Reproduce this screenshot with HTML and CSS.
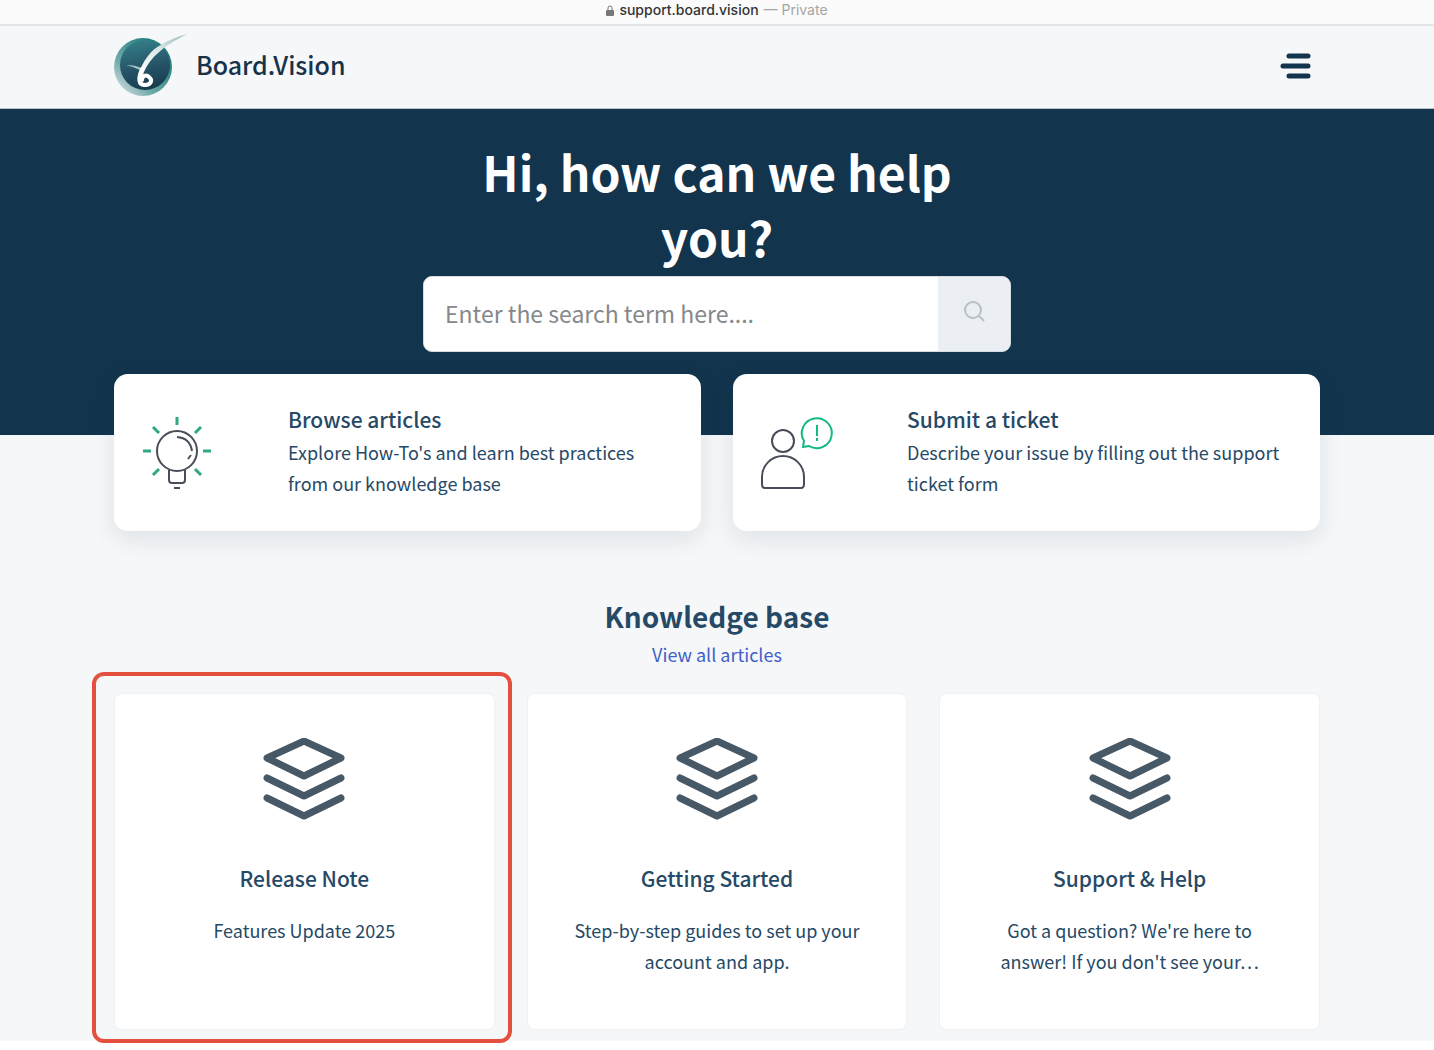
FILE: index.html
```html
<!DOCTYPE html>
<html lang="en">
<head>
<meta charset="utf-8">
<meta name="viewport" content="width=device-width, initial-scale=1">
<title>Board.Vision Support</title>
<link rel="stylesheet" href="styles.css">
</head>
<body>
<svg width="0" height="0" class="sprite" aria-hidden="true">
  <symbol id="layers" viewBox="0 0 82 82">
    <path d="M41 3 78 20 41 38 4 20ZM4 40 41 58 78 40M4 60 41 78 78 60" fill="none" stroke="currentColor" stroke-width="7" stroke-linecap="round" stroke-linejoin="round"/>
  </symbol>
</svg>
<div class="address-bar">
  <svg class="lock" viewBox="0 0 8 11" aria-hidden="true"><path d="M2 5V3a2 2 0 0 1 4 0v2" fill="none" stroke="#777" stroke-width="1"/><rect y="5" width="8" height="6" rx="1" fill="#777"/></svg>
  <span class="address">support.board.vision</span>
  <span class="mode">— Private</span>
</div>
<div class="page">
  <header class="header">
    <div class="container header-row">
      <a class="brand" href="#">
        <svg class="logo" viewBox="0 0 74 64" aria-hidden="true">
          <defs>
            <linearGradient id="ring" x1="0.1" y1="0.9" x2="0.8" y2="0.2"><stop offset="0" stop-color="#c9d9dc"/><stop offset="0.35" stop-color="#6fa9aa"/><stop offset="1" stop-color="#1f7f7c"/></linearGradient>
            <linearGradient id="disc" x1="0.3" y1="0" x2="0.5" y2="1"><stop offset="0" stop-color="#34808a"/><stop offset="0.55" stop-color="#275467"/><stop offset="1" stop-color="#183b4d"/></linearGradient>
            <linearGradient id="tail" x1="0" y1="1" x2="1" y2="0"><stop offset="0" stop-color="#fff"/><stop offset="0.55" stop-color="#d5e6e5"/><stop offset="1" stop-color="#8fb5b4"/></linearGradient>
          </defs>
          <circle cx="29" cy="33" r="29" fill="url(#ring)"/>
          <circle cx="31" cy="31" r="25" fill="url(#disc)"/>
          <path d="M12 31Q22 31 27 34L26 36Q20 33 12 31Z" fill="#9fc0c5"/>
          <path d="M73 0C53 6 40 13 34 22C29 28 26 35 25 41L29 41C31 34 37 25 43 20C51 12 60 7 73 0Z" fill="url(#tail)"/>
          <path d="M28 35C24 44 24 51 31 51C37 51 39 46 35 43C32 40 28 42 28 46" fill="none" stroke="#fff" stroke-width="4" stroke-linecap="round"/>
        </svg>
        <span>Board.Vision</span>
      </a>
      <button class="menu" type="button" aria-label="Menu">
        <svg viewBox="0 0 32 28" aria-hidden="true"><path d="M9 4H28M3 14H28M9 24H28" stroke="#12344d" stroke-width="5" stroke-linecap="round"/></svg>
      </button>
    </div>
  </header>
  <section class="hero">
    <h1>Hi, how can we help you?</h1>
    <form class="search">
      <input type="search" placeholder="Enter the search term here...." aria-label="Search">
      <button type="button" aria-label="Search">
        <svg viewBox="0 0 22 22" aria-hidden="true"><circle cx="10" cy="10" r="8" fill="none" stroke="#b9bec4" stroke-width="2"/><path d="m16 16 5 5" stroke="#b9bec4" stroke-width="2"/></svg>
      </button>
    </form>
  </section>
  <main class="container">
    <div class="actions">
      <a class="action" href="#">
        <svg viewBox="0 0 74 74" aria-hidden="true" fill="none" stroke-width="2">
          <path d="M35 2v8M11 12l6 6M59 12l-6 6M1 36h8M61 36h8M11 60l6-6M59 60l-6-6" stroke="#2fa884" stroke-width="3"/>
          <circle cx="35" cy="36" r="20" stroke="#474e59"/>
          <path d="M35 22q13 1 15 14M49 40l-3 4" stroke="#474e59"/>
          <path d="M27 55v10q0 3 3 3h10q3 0 3-3V55M32 73h6" stroke="#474e59"/>
        </svg>
        <div><h2>Browse articles</h2><p>Explore How-To's and learn best practices from our knowledge base</p></div>
      </a>
      <a class="action" href="#">
        <svg viewBox="0 0 74 74" aria-hidden="true" fill="none" stroke-width="2">
          <circle cx="22" cy="26" r="11" stroke="#474e59"/>
          <path d="M4 73H40Q43 73 43 69V62A21 21 0 0 0 1 62V69Q1 73 4 73Z" stroke="#474e59"/>
          <path d="M43 26A15 15 0 1 1 48 31L42 32Z" stroke="#12b886" stroke-linejoin="round"/>
          <path d="M56 10v11M56 23v3" stroke="#12b886"/>
        </svg>
        <div><h2>Submit a ticket</h2><p>Describe your issue by filling out the support ticket form</p></div>
      </a>
    </div>
    <section class="knowledge">
      <h2>Knowledge base</h2>
      <a class="view-all" href="#">View all articles</a>
      <div class="cards">
        <a class="card card-marked" href="#"><svg aria-hidden="true"><use href="#layers"/></svg><h3>Release Note</h3><p>Features Update 2025</p></a>
        <a class="card" href="#"><svg aria-hidden="true"><use href="#layers"/></svg><h3>Getting Started</h3><p>Step-by-step guides to set up your account and app.</p></a>
        <a class="card" href="#"><svg aria-hidden="true"><use href="#layers"/></svg><h3>Support &amp; Help</h3><p>Got a question? We're here to answer! If you don't see your…</p></a>
      </div>
    </section>
  </main>
</div>
</body>
</html>
```
FILE: styles.css
```css
* { box-sizing: border-box; }
body {
  margin: 0;
  min-height: 100vh;
  background: #fff;
  color: #264966;
  font-family: "Noto Sans CJK SC", "Noto Sans", sans-serif;
  font-size: 18px;
  line-height: 31px;
}
h1, h2, h3, p { margin: 0; }
a { color: inherit; text-decoration: none; }
button { border: 0; padding: 0; cursor: pointer; }
.sprite { position: absolute; }
.address-bar {
  display: flex;
  align-items: center;
  justify-content: center;
  gap: 5px;
  height: 26px;
  padding-bottom: 4px;
  background: #fbfbfb;
  border-bottom: 2px solid #e4e5e6;
  font-family: Inter, "Liberation Sans", sans-serif;
  font-size: 14px;
  line-height: 20px;
}
.lock { width: 8px; height: 11px; }
.address { color: #333; font-weight: 500; }
.mode { color: #a5a5a5; }
.page { background: #f5f7f9; padding-bottom: 12px; }
.container { width: 85%; max-width: 1206px; margin: 0 auto; }
.header { border-bottom: 1px solid #b9c5ce; }
.header-row { display: flex; align-items: center; justify-content: space-between; height: 82px; padding-bottom: 2px; }
.brand { display: flex; align-items: center; gap: 8px; color: #183247; font-size: 25px; font-weight: 500; }
.brand span { padding-bottom: 3px; }
.logo { width: 74px; height: 64px; }
.menu { display: flex; background: none; margin-right: 8px; }
.menu svg { width: 32px; height: 28px; }
.hero {
  display: flex;
  flex-direction: column;
  align-items: center;
  padding: 30px 16px 83px;
  background: #12344d;
}
.hero h1 {
  max-width: 520px;
  margin-bottom: 7px;
  color: #fff;
  font-size: 48px;
  line-height: 65px;
  text-align: center;
}
.search {
  display: flex;
  width: 100%;
  max-width: 588px;
  height: 76px;
  overflow: hidden;
  background: #fff;
  border: 1px solid #d5dde3;
  border-radius: 9px;
}
.search input {
  flex: 1;
  min-width: 0;
  padding: 0 21px 2px;
  border: 0;
  background: #fff;
  font: inherit;
  font-size: 23px;
}
.search input::placeholder { color: #85888c; opacity: 1; }
.search button { width: 72px; padding-bottom: 4px; background: #ebeef2; }
.search svg { width: 22px; height: 22px; }
.actions {
  display: grid;
  grid-template-columns: 1fr 1fr;
  gap: 32px;
  margin-top: -61px;
}
.action {
  display: flex;
  gap: 72px;
  padding: 29px 28px;
  min-height: 157px;
  background: #fff;
  border-radius: 14px;
  box-shadow: 0 8px 24px rgba(24, 50, 71, 0.1);
}
.action svg { flex: none; width: 74px; height: 74px; margin-top: 12px; }
.action h2, .card h3 { font-size: 21px; font-weight: 500; line-height: 32px; }
.action p { margin-top: 2px; }
.knowledge { padding-top: 65px; text-align: center; }
.knowledge > h2 { font-size: 28px; line-height: 40px; }
.view-all { display: block; color: #405fc8; margin: 3px 0 24px; }
.cards { display: grid; grid-template-columns: repeat(3, 1fr); gap: 34px; padding: 0 1px; }
.card {
  position: relative;
  min-height: 335px;
  padding: 44px 40px 32px;
  background: #fff;
  border-radius: 6px;
  box-shadow: 0 0 2px rgba(24, 50, 71, 0.1);
}
.card svg { display: block; width: 82px; height: 82px; margin: 0 auto 42px; color: #475867; }
.card p { margin-top: 21px; }
.card-marked::after {
  content: "";
  position: absolute;
  inset: -22px -18px -14px -23px;
  border: 4px solid #e54f3d;
  border-radius: 12px;
}
```
